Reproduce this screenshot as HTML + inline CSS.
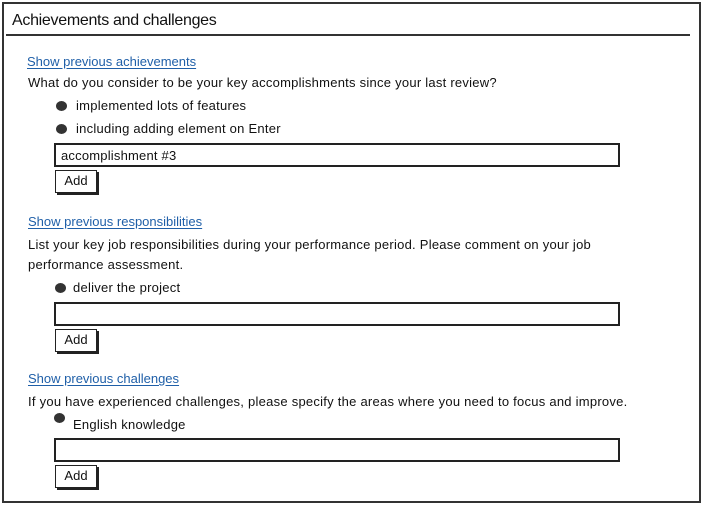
<!DOCTYPE html>
<html><head><meta charset="utf-8"><style>
*{margin:0;padding:0;box-sizing:border-box}
body{width:704px;height:506px;background:#fff;position:relative;overflow:hidden;font-family:"Liberation Sans",sans-serif;color:#111}
.a{position:absolute;white-space:nowrap}
.t{font-size:13px;letter-spacing:0.25px;line-height:16px}
.lk{color:#1f5fa8;text-decoration:underline;text-underline-offset:2px;letter-spacing:0}
.dot{position:absolute;width:11px;height:10px;border-radius:50%;background:#333}
.in{position:absolute;left:54px;width:566px;height:24px;border:2px solid #222;border-right-width:2.5px;background:#fff;font-size:13px;letter-spacing:0.2px;padding:3px 0 0 5px}
.btn{position:absolute;left:55px;width:42px;height:23px;border:1.5px solid #222;background:#fff;box-shadow:2px 2px 0 #222;font-size:13px;text-align:center;line-height:20px}
</style></head><body>
<div class="a" style="left:2px;top:2px;width:699px;height:501px;border:2px solid #333"></div>
<div class="a" style="left:12px;top:12px;font-size:16px;letter-spacing:-0.3px">Achievements and challenges</div>
<div class="a" style="left:6px;top:34px;width:684px;height:2px;background:#333"></div>

<div class="a t lk" style="left:27px;top:54px">Show previous achievements</div>
<div class="a t" style="left:28px;top:75px">What do you consider to be your key accomplishments since your last review?</div>
<div class="dot" style="left:56px;top:101px"></div>
<div class="a t" style="left:76px;top:98px">implemented lots of features</div>
<div class="dot" style="left:56px;top:124px"></div>
<div class="a t" style="left:76px;top:121px">including adding element on Enter</div>
<div class="in" style="top:143px">accomplishment #3</div>
<div class="btn" style="top:170px">Add</div>

<div class="a t lk" style="left:28px;top:214px">Show previous responsibilities</div>
<div class="a t" style="left:28px;top:237px">List your key job responsibilities during your performance period. Please comment on your job</div>
<div class="a t" style="left:28px;top:257px">performance assessment.</div>
<div class="dot" style="left:55px;top:283px"></div>
<div class="a t" style="left:73px;top:280px">deliver the project</div>
<div class="in" style="top:302px"></div>
<div class="btn" style="top:329px">Add</div>

<div class="a t lk" style="left:28px;top:371px">Show previous challenges</div>
<div class="a t" style="left:28px;top:394px">If you have experienced challenges, please specify the areas where you need to focus and improve.</div>
<div class="dot" style="left:54px;top:413px"></div>
<div class="a t" style="left:73px;top:417px">English knowledge</div>
<div class="in" style="top:438px"></div>
<div class="btn" style="top:465px">Add</div>
</body></html>
